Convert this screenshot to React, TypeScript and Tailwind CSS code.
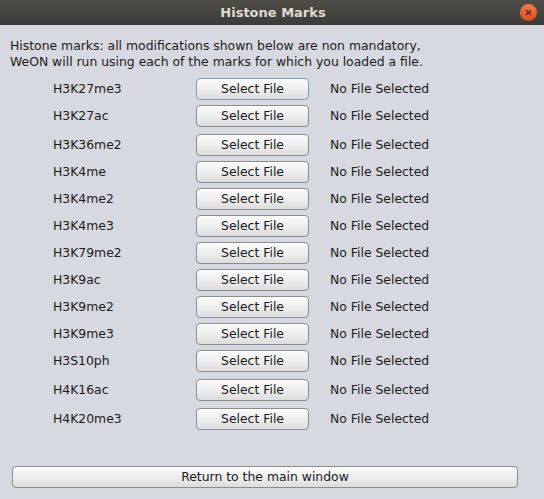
import React from "react";

const MARKS = [
  { name: "H3K27me3", gap: 0 },
  { name: "H3K27ac", gap: 5 },
  { name: "H3K36me2", gap: 7 },
  { name: "H3K4me", gap: 5 },
  { name: "H3K4me2", gap: 5 },
  { name: "H3K4me3", gap: 5 },
  { name: "H3K79me2", gap: 5 },
  { name: "H3K9ac", gap: 5 },
  { name: "H3K9me2", gap: 5 },
  { name: "H3K9me3", gap: 5 },
  { name: "H3S10ph", gap: 5 },
  { name: "H4K16ac", gap: 7 },
  { name: "H4K20me3", gap: 7 },
];

const btn =
  "h-[22px] rounded-[4px] border bg-gradient-to-b from-[#fbfbfb] via-[#eeeeee] to-[#dcdcdc] text-[12.4px] text-[#1a1a1a] flex items-center justify-center shadow-[inset_0_1px_0_#ffffff]";

export default function App() {
  return (
    <div
      className="w-[544px] h-[499px] bg-[#d6d9df] flex flex-col text-[#1c1c1c]"
      style={{ fontFamily: '"DejaVu Sans", sans-serif' }}
    >
      <div className="h-[25px] bg-gradient-to-b from-[#4f4d48] to-[#3c3b37] flex items-center justify-center relative">
        <span className="text-[13px] font-bold text-[#dfdbd2] pl-[2px]">Histone Marks</span>
        <div className="absolute right-[7px] top-[4px] w-[17px] h-[17px] rounded-full bg-gradient-to-b from-[#f27a4c] to-[#df4a16] flex items-center justify-center">
          <svg width="7" height="7" viewBox="0 0 7 7">
            <path d="M1 1L6 6M6 1L1 6" stroke="#5a2410" strokeWidth="1.3" />
          </svg>
        </div>
      </div>

      <div className="pl-[10px] pt-[13px] text-[12.4px] leading-[16px]">
        <div>Histone marks: all modifications shown below are non mandatory,</div>
        <div>WeON will run using each of the marks for which you loaded a file.</div>
      </div>

      <div className="flex flex-col mt-[8px]">
        {MARKS.map((m, i) => (
          <div
            key={m.name}
            className="flex items-center h-[22px] text-[12.4px]"
            style={{ marginTop: m.gap }}
          >
            <span className="w-[196px] pl-[53px]">{m.name}</span>
            <div
              className={`${btn} w-[113px] ${
                i === 0 ? "border-[#7d9cc4]" : "border-[#8c8c8c]"
              }`}
            >
              Select File
            </div>
            <span className="ml-[21px]">No File Selected</span>
          </div>
        ))}
      </div>

      <div className="mt-[36px] px-[12px] pr-[26px]">
        <div className={`${btn} w-full border-[#8c8c8c]`}>Return to the main window</div>
      </div>
    </div>
  );
}
